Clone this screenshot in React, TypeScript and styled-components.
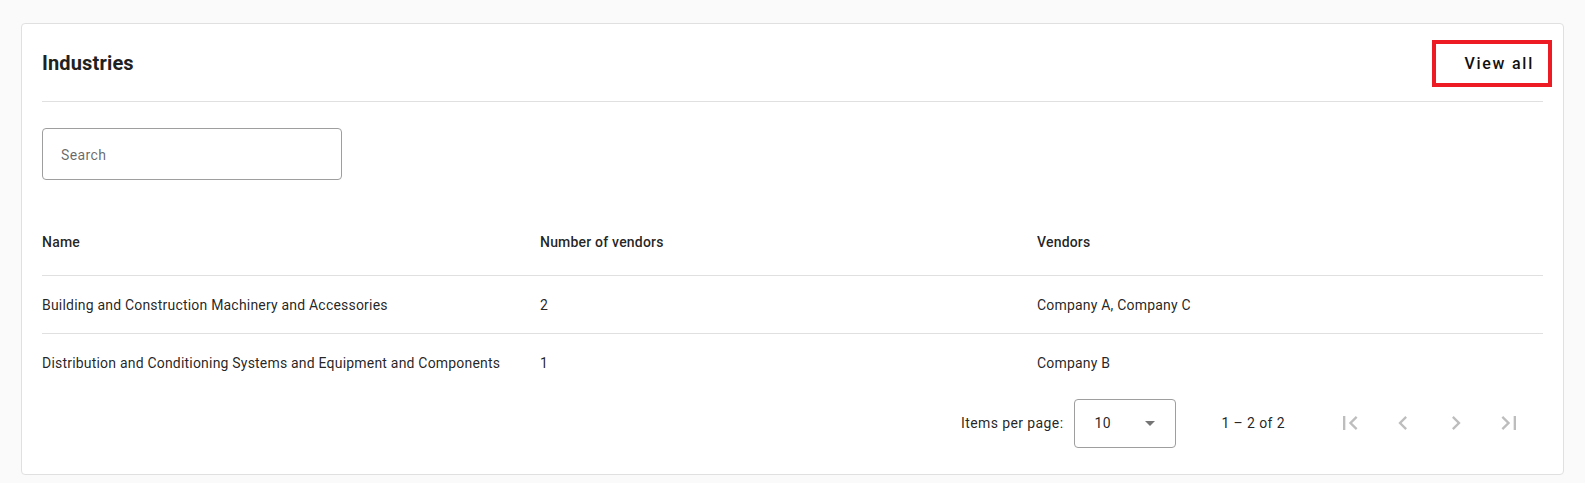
import styled, { createGlobalStyle } from 'styled-components';

const GlobalStyle = createGlobalStyle`
  * {
    box-sizing: border-box;
  }

  body {
    margin: 0;
    padding: 23px 21px;
    background-color: #fafafa;
    font-family: Roboto, "Liberation Sans", Arial, sans-serif;
    color: rgba(0, 0, 0, 0.87);
  }
`;

const S = {
  Card: styled.section`
    padding: 0 20px 20px;
    border: 1px solid #e0e0e0;
    border-radius: 4px;
    background-color: #ffffff;
  `,

  Header: styled.header`
    display: flex;
    justify-content: space-between;
    align-items: center;
    height: 78px;
    padding: 2px 0 1px;
    border-bottom: 1px solid #e0e0e0;
  `,

  Title: styled.h2`
    margin: 0;
    font-size: 20px;
    font-weight: 700;
    letter-spacing: 0.15px;
    color: #212121;
  `,

  ViewAllButton: styled.button`
    display: flex;
    justify-content: flex-end;
    align-items: center;
    width: 120px;
    height: 47px;
    margin-right: -9px;
    padding: 0 14px 0 0;
    border: 4px solid #ed1c24;
    background: none;
    font-family: inherit;
    font-size: 16px;
    font-weight: 500;
    letter-spacing: 1.75px;
    color: #111111;
    cursor: pointer;
  `,

  SearchField: styled.input`
    display: block;
    width: 300px;
    height: 52px;
    margin-top: 26px;
    padding: 2px 18px 0;
    border: 1px solid #9e9e9e;
    border-radius: 4px;
    font-family: inherit;
    font-size: 14px;
    letter-spacing: 0.4px;
    color: rgba(0, 0, 0, 0.87);
    outline: none;

    &::placeholder {
      color: rgba(0, 0, 0, 0.6);
    }
  `,

  Table: styled.div`
    margin-top: 38px;
  `,

  Row: styled.div<{ $header?: boolean; $last?: boolean }>`
    display: grid;
    grid-template-columns: 498px 497px 1fr;
    align-items: center;
    height: 58px;
    padding-bottom: ${({ $header }) => ($header ? '9px' : '0')};
    border-bottom: ${({ $last }) => ($last ? 'none' : '1px solid #e0e0e0')};
    font-size: 14px;
    font-weight: ${({ $header }) => ($header ? 500 : 400)};
    letter-spacing: 0.2px;
  `,

  Cell: styled.div`
    white-space: nowrap;
  `,

  Paginator: styled.div`
    display: flex;
    justify-content: flex-end;
    align-items: center;
    height: 62px;
    padding-right: 10px;
    font-size: 14px;
    letter-spacing: 0.4px;
  `,

  PageSizeLabel: styled.span`
    margin-right: 11px;
  `,

  PageSizeSelect: styled.div`
    display: flex;
    justify-content: space-between;
    align-items: center;
    width: 102px;
    height: 49px;
    padding: 0 20px 0 19px;
    border: 1px solid #9e9e9e;
    border-radius: 4px;
  `,

  SelectArrow: styled.span`
    width: 0;
    height: 0;
    border-left: 5px solid transparent;
    border-right: 5px solid transparent;
    border-top: 5px solid rgba(0, 0, 0, 0.54);
  `,

  RangeLabel: styled.span`
    margin: 0 41px 0 45px;
  `,

  NavButtons: styled.div`
    display: flex;
    gap: 5px;
  `,

  NavButton: styled.button`
    display: flex;
    justify-content: center;
    align-items: center;
    width: 48px;
    height: 48px;
    padding: 0;
    border: none;
    background: none;
    color: rgba(0, 0, 0, 0.26);

    svg {
      width: 28px;
      height: 28px;
      fill: currentColor;
    }
  `,
};

const industries = [
  {
    id: 1,
    name: 'Building and Construction Machinery and Accessories',
    count: 2,
    vendors: 'Company A, Company C',
  },
  {
    id: 2,
    name: 'Distribution and Conditioning Systems and Equipment and Components',
    count: 1,
    vendors: 'Company B',
  },
];

// first page, previous, next, last page
const navIcons = [
  'M18.41 16.59L13.82 12l4.59-4.59L17 6l-6 6 6 6zM6 6h2v12H6z',
  'M15.41 7.41L14 6l-6 6 6 6 1.41-1.41L10.83 12z',
  'M10 6L8.59 7.41 13.17 12l-4.58 4.59L10 18l6-6z',
  'M5.59 7.41L10.18 12l-4.59 4.59L7 18l6-6-6-6zM16 6h2v12h-2z',
];

function App() {
  return (
    <>
      <GlobalStyle />
      <S.Card>
        <S.Header>
          <S.Title>Industries</S.Title>
          <S.ViewAllButton>View all</S.ViewAllButton>
        </S.Header>

        <S.SearchField placeholder="Search" />

        <S.Table>
          <S.Row $header>
            <S.Cell>Name</S.Cell>
            <S.Cell>Number of vendors</S.Cell>
            <S.Cell>Vendors</S.Cell>
          </S.Row>
          {industries.map((industry, index) => (
            <S.Row key={industry.id} $last={index === industries.length - 1}>
              <S.Cell>{industry.name}</S.Cell>
              <S.Cell>{industry.count}</S.Cell>
              <S.Cell>{industry.vendors}</S.Cell>
            </S.Row>
          ))}
        </S.Table>

        <S.Paginator>
          <S.PageSizeLabel>Items per page:</S.PageSizeLabel>
          <S.PageSizeSelect>
            <span>10</span>
            <S.SelectArrow />
          </S.PageSizeSelect>
          <S.RangeLabel>1 – 2 of 2</S.RangeLabel>
          <S.NavButtons>
            {navIcons.map((d) => (
              <S.NavButton key={d} disabled>
                <svg viewBox="0 0 24 24">
                  <path d={d} />
                </svg>
              </S.NavButton>
            ))}
          </S.NavButtons>
        </S.Paginator>
      </S.Card>
    </>
  );
}

export default App;
